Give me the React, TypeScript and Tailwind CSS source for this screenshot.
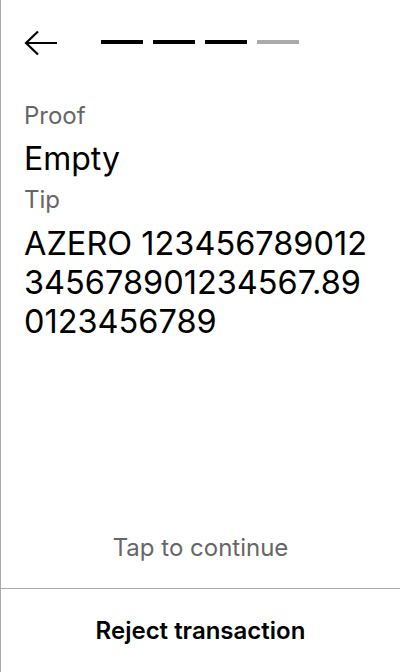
import React from "react";

export default function App() {
  return (
    <div
      className="w-[400px] h-[672px] bg-white border-l border-[#aaaaaa] flex flex-col text-black"
      style={{ fontFamily: "Inter, 'Noto Sans', sans-serif" }}
    >
      <div className="h-[84px] flex items-center pl-[23px] shrink-0">
        <svg width="34" height="28" viewBox="0 0 34 28" className="shrink-0 mt-[3px]">
          <path d="M33 13H3M14 1.5L2 13L14 24.5" fill="none" stroke="black" strokeWidth="2.2" />
        </svg>
        <div className="flex gap-[10px] ml-[43px]">
          <div className="w-[42px] h-[4px] bg-black" />
          <div className="w-[42px] h-[4px] bg-black" />
          <div className="w-[42px] h-[4px] bg-black" />
          <div className="w-[42px] h-[4px] bg-[#aaaaaa]" />
        </div>
      </div>
      <div className="pl-[23px] pr-[28px] flex flex-col">
        <div className="text-[24px] leading-[28px] text-[#666666] mt-[18px]">Proof</div>
        <div className="text-[32px] leading-[38px] mt-[10px]">Empty</div>
        <div className="text-[24px] leading-[28px] text-[#666666] mt-[8px]">Tip</div>
        <div className="text-[32.5px] leading-[39px] mt-[10px] break-all">
          AZERO 123456789012345678901234567.890123456789
        </div>
      </div>
      <div className="flex-1" />
      <div className="text-[24px] leading-[28px] text-[#666666] text-center pb-[26px]">Tap to continue</div>
      <div className="border-t border-[#aaaaaa] h-[84px] flex items-center justify-center">
        <span className="text-[24px] font-semibold">Reject transaction</span>
      </div>
    </div>
  );
}
